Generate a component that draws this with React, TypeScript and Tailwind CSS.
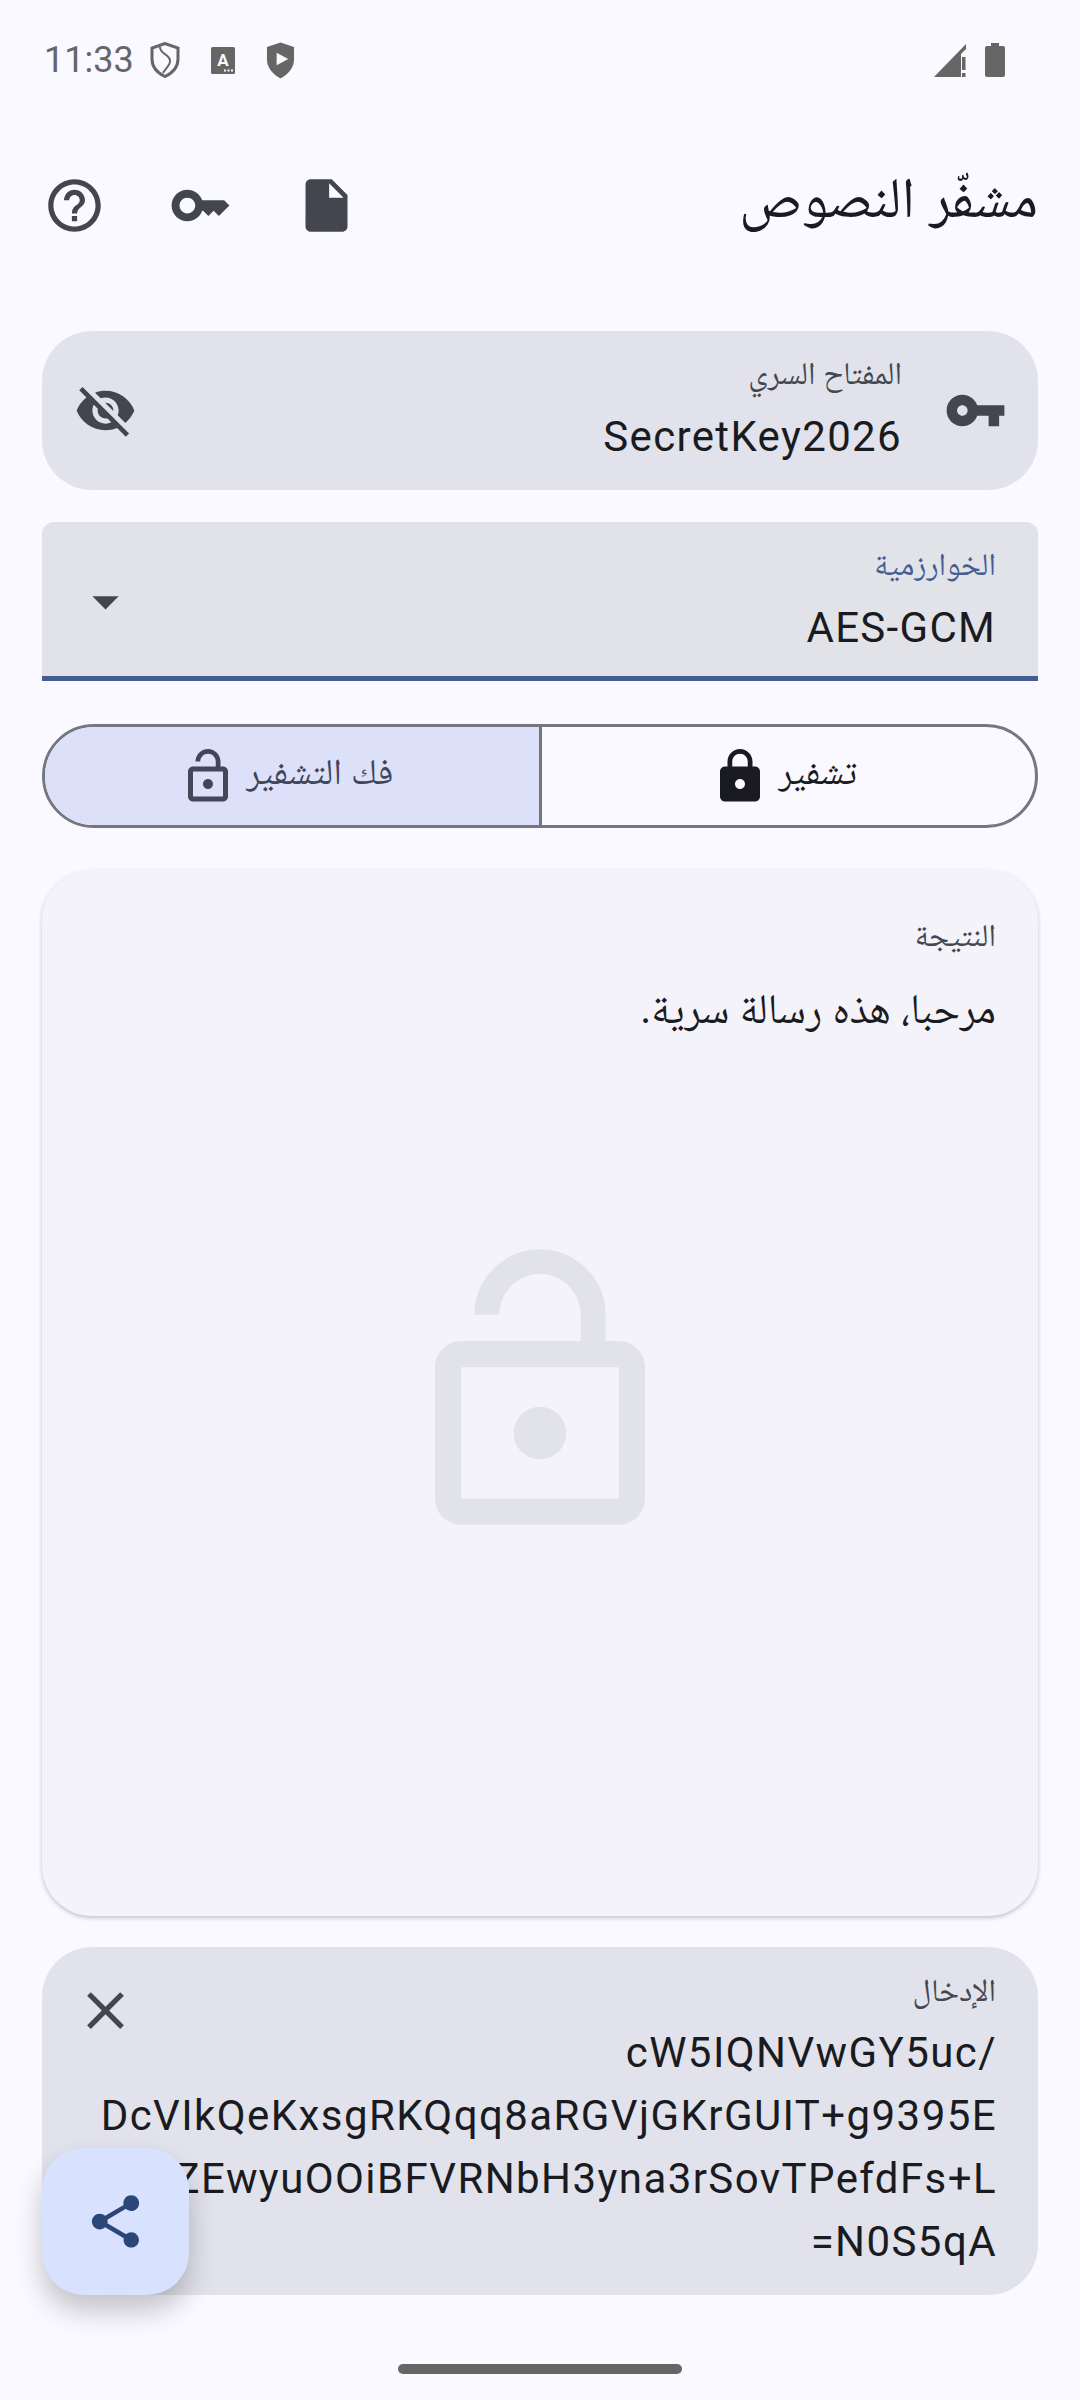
import type { ReactNode } from "react";

const ICONS = {
  help: "M11 18h2v-2h-2v2zm1-16C6.48 2 2 6.48 2 12s4.48 10 10 10 10-4.48 10-10S17.52 2 12 2zm0 18c-4.41 0-8-3.59-8-8s3.59-8 8-8 8 3.59 8 8-3.59 8-8 8zm0-14c-2.21 0-4 1.79-4 4h2c0-1.1.9-2 2-2s2 .9 2 2c0 2-3 1.75-3 5h2c0-2.25 3-2.5 3-5 0-2.21-1.79-4-4-4z",
  key: "M21 10h-8.35C11.83 7.67 9.61 6 7 6c-3.31 0-6 2.69-6 6s2.69 6 6 6c2.61 0 4.83-1.67 5.65-4H13l2 2 2-2 2 2 4-4.04L21 10zM7 15c-1.65 0-3-1.35-3-3s1.35-3 3-3 3 1.35 3 3-1.35 3-3 3z",
  file: "M14 2H6c-1.1 0-1.99.9-1.99 2L4 20c0 1.1.89 2 1.99 2H18c1.1 0 2-.9 2-2V8l-6-6zm-1 7V3.5L18.5 9H13z",
  eyeOff: "M12 7c2.76 0 5 2.24 5 5 0 .65-.13 1.26-.36 1.83l2.92 2.92c1.51-1.26 2.7-2.89 3.43-4.75-1.73-4.39-6-7.5-11-7.5-1.4 0-2.74.25-3.98.7l2.16 2.16C10.74 7.13 11.35 7 12 7zM2 4.27l2.28 2.28.46.46C3.08 8.3 1.78 10.02 1 12c1.73 4.39 6 7.5 11 7.5 1.55 0 3.03-.3 4.38-.84l.42.42L19.73 22 21 20.73 3.27 3 2 4.27zM7.53 9.8l1.55 1.55c-.05.21-.08.43-.08.65 0 1.66 1.34 3 3 3 .22 0 .44-.03.65-.08l1.55 1.55c-.67.33-1.41.53-2.2.53-2.76 0-5-2.24-5-5 0-.79.2-1.53.53-2.2zm4.31-.78l3.15 3.15.02-.16c0-1.66-1.34-3-3-3l-.17.01z",
  vpnKey: "M12.65 10C11.83 7.67 9.61 6 7 6c-3.31 0-6 2.69-6 6s2.69 6 6 6c2.61 0 4.83-1.67 5.65-4H17v4h4v-4h2v-4H12.65zM7 14c-1.1 0-2-.9-2-2s.9-2 2-2 2 .9 2 2-.9 2-2 2z",
  dropDown: "M7 10l5 5 5-5z",
  close: "M19 6.41L17.59 5 12 10.59 6.41 5 5 6.41 10.59 12 5 17.59 6.41 19 12 13.41 17.59 19 19 17.59 13.41 12z",
  lock: "M18 8h-1V6c0-2.76-2.24-5-5-5S7 3.24 7 6v2H6c-1.1 0-2 .9-2 2v10c0 1.1.9 2 2 2h12c1.1 0 2-.9 2-2V10c0-1.1-.9-2-2-2zm-6 9c-1.1 0-2-.9-2-2s.9-2 2-2 2 .9 2 2-.9 2-2 2zm3.1-9H8.9V6c0-1.71 1.39-3.1 3.1-3.1 1.71 0 3.1 1.39 3.1 3.1v2z",
  lockOpen: "M12 17c1.1 0 2-.9 2-2s-.9-2-2-2-2 .9-2 2 .9 2 2 2zm6-9h-1V6c0-2.76-2.24-5-5-5S7 3.24 7 6h1.9c0-1.71 1.39-3.1 3.1-3.1 1.71 0 3.1 1.39 3.1 3.1v2H6c-1.1 0-2 .9-2 2v10c0 1.1.9 2 2 2h12c1.1 0 2-.9 2-2V10c0-1.1-.9-2-2-2zm0 12H6V10h12v10z",
  share: "M18 16.08c-.76 0-1.44.3-1.96.77L8.91 12.7c.05-.23.09-.46.09-.7s-.04-.47-.09-.7l7.05-4.11c.54.5 1.25.81 2.04.81 1.66 0 3-1.34 3-3s-1.34-3-3-3-3 1.34-3 3c0 .24.04.47.09.7L8.04 9.81C7.5 9.31 6.79 9 6 9c-1.66 0-3 1.34-3 3s1.34 3 3 3c.79 0 1.5-.31 2.04-.81l7.12 4.16c-.05.21-.08.43-.08.65 0 1.61 1.31 2.92 2.92 2.92s2.92-1.31 2.92-2.92-1.31-2.92-2.92-2.92z",
};

function Icon({ d, className }: { d: string; className: string }) {
  return (
    <svg viewBox="0 0 24 24" fill="currentColor" className={className}>
      <path d={d} />
    </svg>
  );
}

function StatusBar() {
  return (
    <div className="flex h-[120px] items-center justify-between pl-[44px] pr-[75px] text-[#666666]">
      <div className="flex items-center">
        <span className="w-[90px] text-[36px] font-normal leading-none">11:33</span>
        <svg viewBox="0 0 30 36" className="ml-[16px] h-[36px] w-[30px]" fill="none" stroke="currentColor">
          <path d="M15 1.5 L2 6 v11 c0 8 5.500 14 13 17.500 C22.500 31 28 25 28 17 V6 z" strokeWidth="3" />
          <path d="M10 5 c0 8 11 7 10 15 c-.5 4-4 6-7 11" strokeWidth="2" />
        </svg>
        <svg viewBox="0 0 24 27" className="ml-[31px] h-[27px] w-[24px]">
          <rect width="24" height="27" rx="1.500" fill="currentColor" />
          <text x="12" y="19" textAnchor="middle" fontSize="17" fontWeight="700" fontFamily="Roboto" fill="#f9f9ff">A</text>
          <path d="M13 22.500h2v2h-2zM16.500 22.500h2v2h-2zM20 22.500h2v2h-2z" fill="#f9f9ff" />
        </svg>
        <svg viewBox="0 0 30 37" className="ml-[31px] h-[37px] w-[29px]">
          <path d="M15 0 L1 4.500 v13 c0 8.500 6 15.500 14 19.500 8-4 14-11 14-19.500 V4.500 z" fill="currentColor" />
          <path d="M11 10.500 v13 l12-6.500 z" fill="#f9f9ff" />
        </svg>
      </div>
      <div className="flex items-center gap-[19px]">
        <svg viewBox="0 0 32 33" className="h-[33px] w-[32px]" fill="currentColor">
          <path d="M0 33 L32 0 V5 L27 10 V33 z" />
          <path d="M28 13 H31.500 V26 H28 z M28 29 H31.500 V33 H28 z" />
        </svg>
        <svg viewBox="0 0 20 34" className="h-[34px] w-[20px]" fill="currentColor">
          <path d="M6 0 h8 v3 h4 a2 2 0 0 1 2 2 v27 a2 2 0 0 1-2 2 H2 a2 2 0 0 1-2-2 V5 a2 2 0 0 1 2-2 h4 z" />
        </svg>
      </div>
    </div>
  );
}

function Toolbar() {
  return (
    <div className="flex h-[170px] items-center justify-between pl-[11px] pr-[42px]">
      <div className="flex text-[#44464f]">
        <div className="flex w-[126px] justify-center"><Icon d={ICONS.help} className="h-[63px] w-[63px]" /></div>
        <div className="flex w-[126px] justify-center"><Icon d={ICONS.key} className="h-[63px] w-[63px]" /></div>
        <div className="flex w-[126px] justify-center"><Icon d={ICONS.file} className="h-[63px] w-[63px]" /></div>
      </div>
      <h1 dir="rtl" className="pb-[16px] text-[57px] font-normal leading-none text-[#1a1b20]">مشفّر النصوص</h1>
    </div>
  );
}

function Segment({ d, label, active }: { d: string; label: string; active?: boolean }) {
  return (
    <div className={active ? "flex w-[493.5px] items-center justify-center gap-[17px] bg-[#dce1f9] pr-[3px] text-[#414659]" : "flex w-[493.5px] items-center justify-center gap-[17px] text-[#1a1b20]"}>
      <svg viewBox="4 1 16 22" fill="currentColor" className="h-[55px] w-[42px]">
        <path d={d} />
      </svg>
      <span dir="rtl" className="pb-[8px] text-[36.5px] leading-none">{label}</span>
    </div>
  );
}

function Label({ children, className }: { children: ReactNode; className: string }) {
  return <div dir="rtl" className={"text-[31.5px] leading-[42px] " + className}>{children}</div>;
}

export default function App() {
  return (
    <div className="relative h-[2400px] w-[1080px] overflow-hidden bg-[#f9f9ff] font-['Roboto','Noto_Naskh_Arabic',sans-serif]">
      <StatusBar />
      <Toolbar />

      <main className="mt-[41px] flex flex-col px-[42px]">
        <section className="flex h-[159px] items-center rounded-[50px] bg-[#e1e2ec] pl-[32px] pr-[31px] text-[#44464f]">
          <Icon d={ICONS.eyeOff} className="h-[63px] w-[63px]" />
          <div className="flex-1 pr-[42px] text-right">
            <Label className="text-[#44474e]">المفتاح السري</Label>
            <div className="mt-[10px] text-[42px] leading-[63px] tracking-[1.35px] text-[#1a1b20]">SecretKey2026</div>
          </div>
          <Icon d={ICONS.vpnKey} className="h-[63px] w-[63px]" />
        </section>

        <section className="mt-[32px] flex h-[159px] items-center rounded-t-[12px] border-b-[5px] border-[#445e91] bg-[#e2e2e9] pl-[32px] pr-[42px] text-[#44464f]">
          <Icon d={ICONS.dropDown} className="mt-[4px] h-[63px] w-[63px]" />
          <div className="flex-1 pt-[5px] text-right">
            <Label className="text-[#445e91]">الخوارزمية</Label>
            <div className="mt-[10px] text-[42px] leading-[63px] tracking-[1.3px] text-[#1a1b20]">AES-GCM</div>
          </div>
        </section>

        <section className="mt-[43px] flex h-[104px] overflow-hidden rounded-full border-[3px] border-[#74777f]">
          <Segment d={ICONS.lockOpen} label="فك التشفير" active />
          <div className="w-[3px] bg-[#74777f]" />
          <Segment d={ICONS.lock} label="تشفير" />
        </section>

        <section className="relative mt-[42px] h-[1046px] rounded-[50px] bg-[#f3f3f9] px-[42px] pt-[45px] text-right shadow-[0_2px_4px_rgba(0,0,0,0.22)]">
          <Label className="text-[#44474e]">النتيجة</Label>
          <p dir="rtl" className="mt-[20px] text-[42px] leading-[63px] text-[#1a1b20]">مرحبا، هذه رسالة سرية.</p>
          <Icon d={ICONS.lockOpen} className="absolute left-1/2 top-[366px] h-[315px] w-[315px] -translate-x-1/2 text-[#e2e2e9]" />
        </section>

        <section className="mt-[31px] flex h-[348px] rounded-[50px] bg-[#e1e2ec] pl-[32px] pr-[42px] pt-[23px] text-[#44464f]">
          <Icon d={ICONS.close} className="mt-[9px] h-[63px] w-[63px] shrink-0" />
          <div className="flex min-w-0 flex-1 flex-col items-end whitespace-nowrap text-[42px] leading-[63px] tracking-[1.42px] text-[#1a1b20]">
            <Label className="text-[#44474e]">الإدخال</Label>
            <div className="mt-[9px] -mr-[1px]">cW5IQNVwGY5uc/</div>
            <div className="-mr-[1px]">DcVIkQeKxsgRKQqq8aRGVjGKrGUIT+g9395E</div>
            <div className="-mr-[1px]">ZEwyuOOiBFVRNbH3yna3rSovTPefdFs+L</div>
            <div className="-mr-[1px]">=N0S5qA</div>
          </div>
        </section>

        <div className="mx-auto mt-[69px] h-[10px] w-[284px] rounded-full bg-[#666666]" />
      </main>

      <button className="absolute left-[42px] top-[2148px] flex h-[147px] w-[147px] items-center justify-center rounded-[42px] bg-[#d8e2ff] text-[#2c4678] shadow-[0_16px_28px_rgba(0,0,0,0.22)]">
        <Icon d={ICONS.share} className="h-[63px] w-[63px]" />
      </button>
    </div>
  );
}
